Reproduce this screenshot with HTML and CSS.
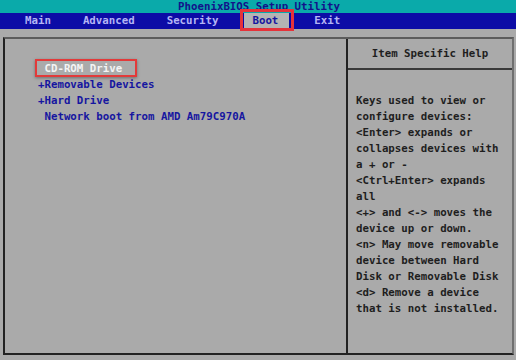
FILE: index.html
```html
<!DOCTYPE html>
<html lang="en">
<head>
    <meta charset="UTF-8">
    <meta name="viewport" content="width=device-width, initial-scale=1.0">
    <title>PhoenixBIOS Setup Utility</title>

    <link rel="stylesheet" href="styles.css">
</head>

<body>
    <div class="titleBar">PhoenixBIOS Setup Utility</div>
    <div class="menuBar">
        <span class="menuItem">Main</span>
        <span class="menuItem">Advanced</span>
        <span class="menuItem">Security</span>
        <span class="menuItem active">Boot</span>
        <span class="menuItem">Exit</span>
    </div>
    <div class="frame">
        <div class="bootList">
            <div class="bootItem selected"><span class="mark"></span><span class="picked">CD-ROM Drive</span></div>
            <div class="bootItem"><span class="mark">+</span>Removable Devices</div>
            <div class="bootItem"><span class="mark">+</span>Hard Drive</div>
            <div class="bootItem"><span class="mark"></span>Network boot from AMD Am79C970A</div>
        </div>
        <div class="helpPanel">
            <div class="helpTitle">Item Specific Help</div>
            <div class="helpText">
                <div>Keys used to view or</div>
                <div>configure devices:</div>
                <div>&lt;Enter&gt; expands or</div>
                <div>collapses devices with</div>
                <div>a + or -</div>
                <div>&lt;Ctrl+Enter&gt; expands</div>
                <div>all</div>
                <div>&lt;+&gt; and &lt;-&gt; moves the</div>
                <div>device up or down.</div>
                <div>&lt;n&gt; May move removable</div>
                <div>device between Hard</div>
                <div>Disk or Removable Disk</div>
                <div>&lt;d&gt; Remove a device</div>
                <div>that is not installed.</div>
            </div>
        </div>
    </div>
</body>

</html>
```

FILE: styles.css
```css
* {
    margin: 0;
    padding: 0;
    box-sizing: border-box;
}
body {
    width: 516px;
    height: 360px;
    overflow: hidden;
    background-color: #aaaaaa;
    font-family: "DejaVu Sans Mono", monospace;
    font-size: 10.75px;
    font-weight: bold;
}
.titleBar {
    height: 13px;
    line-height: 13px;
    background-color: #0aaaaa;
    color: #12128a;
    text-align: center;
    padding-left: 2px;
    overflow: hidden;
}
.menuBar {
    height: 16px;
    line-height: 16px;
    background-color: #0c0ca6;
    color: #b4b4f4;
    display: flex;
    gap: 18px;
    padding-left: 18px;
}
.menuItem {
    padding: 0 7px;
}
.menuItem.active {
    background-color: #b4b4b4;
    color: #1616a0;
    position: relative;
    margin-left: 1px;
    padding: 0 11px 0 8px;
}
/* red marker drawn over the screenshot */
.menuItem.active::after {
    content: "";
    position: absolute;
    top: -4px;
    left: -4px;
    right: -5px;
    bottom: -2px;
    border: 3px solid #e5333a;
}
.frame {
    height: 318px;
    margin: 8px 2px 0 3px;
    border-left: 2px solid #222222;
    border-bottom: 2px solid #222222;
    border-top: 2px solid #5c5c5c;
    border-right: 2px solid #707070;
    display: grid;
    grid-template-columns: 341px 1fr;
}
.bootList {
    padding: 22px 0 0 33px;
    color: #1616a0;
    line-height: 16px;
}
.mark {
    display: inline-block;
    width: 1ch;
}
.selected {
    color: #f4f4f4;
}
.picked {
    display: inline-block;
    position: relative;
}
.picked::after {
    content: "";
    position: absolute;
    top: -2px;
    left: -9px;
    right: -15px;
    bottom: 0;
    border: 2px solid #e23a3a;
    box-shadow: 0 1px 3px rgba(0, 0, 0, 0.35);
}
.helpPanel {
    border-left: 2px solid #222222;
    color: #1e1e1e;
}
.helpTitle {
    height: 31px;
    border-bottom: 2px solid #3a3a3a;
    display: flex;
    align-items: center;
    justify-content: center;
}
.helpText {
    padding: 23px 0 0 8px;
    line-height: 16px;
}
```
